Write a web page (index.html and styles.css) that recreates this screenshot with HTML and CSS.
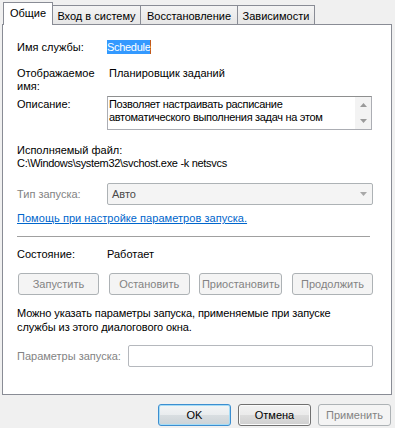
FILE: index.html
```html
<!DOCTYPE html>
<html lang="ru">
<head>
<meta charset="utf-8">
<link rel="stylesheet" href="styles.css">
</head>
<body>
<div class="dialog">
  <div class="tabs">
    <div class="tab active">Общие</div>
    <div class="tab t2">Вход в систему</div>
    <div class="tab t3">Восстановление</div>
    <div class="tab t4">Зависимости</div>
  </div>
  <div class="panel">
    <div class="row r-name">
      <div class="label">Имя службы:</div>
      <div class="value"><span class="sel">Schedule</span></div>
    </div>
    <div class="row r-disp">
      <div class="label">Отображаемое<br>имя:</div>
      <div class="value pad">Планировщик заданий</div>
    </div>
    <div class="row r-desc">
      <div class="label lab-desc">Описание:</div>
      <div class="textarea">
        <div class="ta-text">Позволяет настраивать расписание<br>автоматического выполнения задач на этом</div>
        <div class="scroll">
          <svg class="arr" width="7" height="4" viewBox="0 0 7 4"><path d="M0 4 L3.5 0 L7 4 Z" fill="#9a9a9a"/></svg>
          <svg class="arr" width="7" height="4" viewBox="0 0 7 4"><path d="M0 0 L3.5 4 L7 0 Z" fill="#9a9a9a"/></svg>
        </div>
      </div>
    </div>
    <div class="block r-exe">
      <div>Исполняемый файл:</div>
      <div class="path">C:\Windows\system32\svchost.exe -k netsvcs</div>
    </div>
    <div class="row r-type">
      <div class="label dis">Тип запуска:</div>
      <div class="combo">
        <span>Авто</span>
        <svg width="7" height="4" viewBox="0 0 7 4"><path d="M0 0 L3.5 4 L7 0 Z" fill="#a8a8a8"/></svg>
      </div>
    </div>
    <div class="link">Помощь при настройке параметров запуска.</div>
    <div class="sep"></div>
    <div class="row r-state">
      <div class="label">Состояние:</div>
      <div class="value">Работает</div>
    </div>
    <div class="btnrow">
      <div class="btn disabled">Запустить</div>
      <div class="btn disabled">Остановить</div>
      <div class="btn disabled wide">Приостановить</div>
      <div class="btn disabled">Продолжить</div>
    </div>
    <div class="para">Можно указать параметры запуска, применяемые при запуске<br>службы из этого диалогового окна.</div>
    <div class="row r-params">
      <div class="label dis lab-params">Параметры запуска:</div>
      <div class="input"></div>
    </div>
  </div>
  <div class="footer">
    <div class="btn default">OK</div>
    <div class="btn normal">Отмена</div>
    <div class="btn disabled">Применить</div>
  </div>
</div>
</body>
</html>
```
FILE: styles.css
```css
html, body {
  margin: 0;
  padding: 0;
}
body {
  background: #f0f0f0;
  font-family: "Liberation Sans", Arial, sans-serif;
  font-size: 11px;
  color: #000;
  width: 395px;
  height: 428px;
  overflow: hidden;
}
.dialog {
  display: flex;
  flex-direction: column;
}
.tabs {
  display: flex;
  align-items: flex-end;
  height: 22px;
  margin-top: 2px;
  padding-left: 3px;
}
.tab {
  box-sizing: border-box;
  height: 19px;
  border: 1px solid #898c95;
  border-bottom: none;
  background: linear-gradient(#f4f4f4, #e6e6e6);
  display: flex;
  align-items: center;
  justify-content: center;
  padding-top: 1px;
  margin-left: -1px;
}
.tab.active {
  position: relative;
  z-index: 2;
  height: 23px;
  margin-bottom: -1px;
  margin-left: 0;
  width: 50px;
  background: #fff;
  padding-top: 0;
  padding-bottom: 3px;
}
.t2 { width: 89px; }
.t3 { width: 98px; }
.t4 { width: 78px; }
.panel {
  box-sizing: border-box;
  margin-left: 2px;
  width: 390px;
  height: 371px;
  border: 1px solid #898c95;
  background: #fff;
  padding: 15px 18px 0 14px;
  display: flex;
  flex-direction: column;
}
.row {
  display: flex;
}
.label {
  width: 90px;
  flex: none;
  line-height: 13px;
}
.dis {
  color: #838383;
}
.value {
  line-height: 13px;
}
.value.pad {
  padding-left: 2px;
}
.r-name {
  height: 14px;
  align-items: center;
}
.r-name .label, .r-name .value {
  line-height: 14px;
}
.sel {
  display: inline-block;
  background: #3399ff;
  color: #fff;
  line-height: 14px;
  letter-spacing: -0.3px;
  border-right: 1px solid #c0581c;
}
.r-disp {
  margin-top: 13px;
}
.r-desc {
  margin-top: 3px;
  height: 34px;
}
.lab-desc {
  padding-top: 2px;
}
.textarea {
  box-sizing: border-box;
  width: 265px;
  height: 34px;
  border: 1px solid #abadb3;
  border-top-color: #8e8f8f;
  display: flex;
}
.ta-text {
  flex: 1;
  padding: 1px 2px 0 1px;
  line-height: 13px;
  letter-spacing: -0.3px;
  overflow: hidden;
  white-space: nowrap;
}
.scroll {
  width: 16px;
  flex: none;
  background: #f3f3f3;
  display: flex;
  flex-direction: column;
  align-items: center;
  justify-content: space-around;
}
.r-exe {
  margin-top: 14px;
  line-height: 13px;
}
.path {
  letter-spacing: -0.3px;
}
.r-type {
  margin-top: 13px;
  height: 22px;
  align-items: center;
}
.combo {
  box-sizing: border-box;
  width: 266px;
  height: 22px;
  border: 1px solid #adb2b5;
  border-radius: 2px;
  background: #f4f4f4;
  display: flex;
  align-items: center;
  justify-content: space-between;
  padding: 0 5px 0 4px;
  color: #4a4a4a;
}
.link {
  margin-top: 7px;
  line-height: 13px;
  color: #0066cc;
  text-decoration: underline;
  letter-spacing: 0.05px;
}
.sep {
  margin-top: 11px;
  width: 353px;
  height: 1px;
  background: #a0a0a0;
}
.r-state {
  margin-top: 11px;
}
.btnrow {
  margin-top: 12px;
  display: flex;
  justify-content: space-between;
  padding-left: 1px;
}
.btn {
  box-sizing: border-box;
  width: 81px;
  height: 22px;
  border-radius: 3px;
  display: flex;
  align-items: center;
  justify-content: center;
}
.btn.wide {
  width: 83px;
}
.btn.disabled {
  border: 1px solid #adb2b5;
  background: #f4f4f4;
  color: #838383;
}
.para {
  margin-top: 11px;
  line-height: 14px;
  letter-spacing: -0.1px;
}
.r-params {
  margin-top: 11px;
  height: 22px;
  align-items: center;
}
.lab-params {
  width: 111px;
}
.input {
  box-sizing: border-box;
  width: 245px;
  height: 22px;
  border: 1px solid #b5b8bd;
  border-radius: 2px;
  background: #fff;
}
.footer {
  margin-top: 9px;
  display: flex;
  justify-content: flex-end;
  gap: 7px;
  padding-right: 4px;
}
.footer .btn {
  width: 73px;
}
.btn.default {
  border: 1px solid #3c8ed0;
  box-shadow: inset 0 0 0 1px #a6dcf6;
  background: linear-gradient(#f3f5f6 0%, #e9ecee 50%, #d9dee1 50%, #ccd3d7 100%);
}
.btn.normal {
  border: 1px solid #707070;
  box-shadow: inset 0 0 0 1px #fbfbfb;
  background: linear-gradient(#f2f2f2 0%, #ebebeb 50%, #dddddd 50%, #cfcfcf 100%);
}
```
